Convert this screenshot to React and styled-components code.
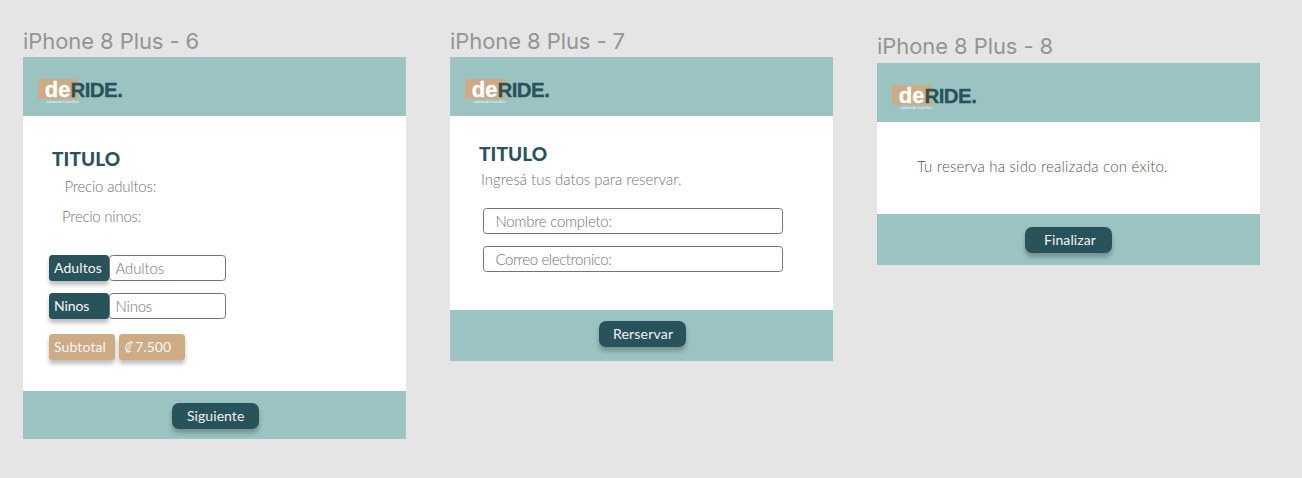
import React from "react";
import styled, { createGlobalStyle } from "styled-components";

const Global = createGlobalStyle`
  * { box-sizing: border-box; }
  body { margin: 0; background: #e5e5e5; }
`;

const teal = "#9bc3c1";
const dark = "#29535b";
const sand = "#cdab85";
const body = '"Lato", "Noto Sans", sans-serif';

const Board = styled.main`
  width: 1302px;
  height: 478px;
  padding-left: 23px;
  display: flex;
  align-items: flex-start;
  gap: 44.5px;
  background: #e5e5e5;
  overflow: hidden;
`;

const Artboard = styled.section`
  width: 382.5px;
  padding-top: ${(p) => p.$top}px;
`;

const Label = styled.h2`
  margin: 0;
  height: 30px;
  font: 430 22px/${(p) => p.$lh ?? 28}px "Inter", sans-serif;
  letter-spacing: -0.08px;
  color: #949494;
  white-space: nowrap;
`;

const Screen = styled.div`
  display: flex;
  flex-direction: column;
  height: ${(p) => p.$h}px;
  background: #fff;
`;

const Header = styled.header`
  flex: none;
  height: 59px;
  padding: 22px 0 0 14.5px;
  background: ${teal};
`;

const Content = styled.div`
  flex: 1;
  display: flex;
  flex-direction: column;
  align-items: flex-start;
  padding: ${(p) => p.$pad};
`;

const Footer = styled.footer`
  flex: none;
  height: ${(p) => p.$h}px;
  padding: ${(p) => p.$pt}px 0 0 ${(p) => p.$pl}px;
  background: ${teal};
`;

const LogoBox = styled.div`
  width: 40.7px;
  height: 20px;
  padding-left: 7.2px;
  background: ${sand};
`;

const Wordmark = styled.div`
  display: flex;
  align-items: baseline;
  height: 21px;
  font: 700 20.5px/21px "Liberation Sans", sans-serif;
  color: ${dark};
  white-space: nowrap;
  -webkit-text-stroke: 0.3px;
`;

const De = styled.span`
  font-size: 22px;
  letter-spacing: 0.1px;
  color: #fff;
`;

const Ride = styled.span`
  letter-spacing: -0.6px;
`;

const Tagline = styled.div`
  margin-left: 1.5px;
  font: 400 3.4px/5px "Liberation Sans", sans-serif;
  letter-spacing: -0.1px;
  color: #f2f7f7;
  white-space: nowrap;
`;

const Title = styled.h1`
  margin: ${(p) => p.$m ?? "0"};
  font: 900 19px/24px ${body};
  letter-spacing: 0.1px;
  color: ${dark};
`;

const Text = styled.p`
  margin: ${(p) => p.$m ?? "0"};
  font: 300 15px/20px ${body};
  letter-spacing: ${(p) => p.$ls ?? 0}px;
  color: ${(p) => p.$color ?? "#747474"};
  white-space: nowrap;
`;

const Row = styled.div`
  display: flex;
  gap: ${(p) => p.$gap ?? 0}px;
  margin-top: ${(p) => p.$mt ?? 0}px;
`;

const Tag = styled.div`
  width: ${(p) => p.$w}px;
  height: 26px;
  padding-left: 5.5px;
  border-radius: 3.5px;
  background: ${(p) => p.$bg ?? dark};
  box-shadow: 0 4px 4px rgba(0, 0, 0, 0.25);
  color: #f5f7f7;
  font: 400 14px/26px ${body};
  letter-spacing: ${(p) => p.$ls ?? 0}px;
  white-space: nowrap;
`;

const Currency = styled.span`
  font: italic 300 15px/20px "Noto Sans", sans-serif;
  letter-spacing: -0.8px;
`;

const Field = styled.div`
  width: ${(p) => p.$w}px;
  height: 26px;
  margin: ${(p) => p.$m ?? "0"};
  padding: 0 0 0 ${(p) => p.$pl}px;
  border: 1px solid #747474;
  border-radius: 3.5px;
  background: #fff;
  color: #747474;
  font: 300 15px/25px ${body};
  letter-spacing: ${(p) => p.$ls ?? 0}px;
  white-space: nowrap;
`;

const Button = styled.button`
  display: block;
  width: 87px;
  height: 26px;
  padding: 0 0 0 ${(p) => p.$pl}px;
  border: 0;
  border-radius: 7px;
  background: ${dark};
  box-shadow: 0 4px 4px rgba(0, 0, 0, 0.25);
  color: #f0f4f4;
  font: 400 14px/26px ${body};
  letter-spacing: ${(p) => p.$ls ?? 0}px;
  text-align: left;
  white-space: nowrap;
`;

function Brand() {
  return (
    <Header>
      <LogoBox>
        <Wordmark>
          <De>de</De>
          <Ride>RIDE.</Ride>
        </Wordmark>
        <Tagline>explorando Costa Rica</Tagline>
      </LogoBox>
    </Header>
  );
}

export default function App() {
  return (
    <>
      <Global />
      <Board>
        <Artboard $top={27}>
          <Label>iPhone 8 Plus - 6</Label>
          <Screen $h={381.5}>
            <Brand />
            <Content $pad="31px 0 0 25.5px">
              <Title $m="0 0 0 3.5px">TITULO</Title>
              <Text $m="5px 0 0 16px" $ls={-0.2}>Precio adultos:</Text>
              <Text $m="10px 0 0 13.5px" $ls={-0.25}>Precio ninos:</Text>
              <Row $mt={29}>
                <Tag $w={60} $ls={0.1}>Adultos</Tag>
                <Field $w={117.8} $pl={6} $ls={-0.1}>Adultos</Field>
              </Row>
              <Row $mt={12}>
                <Tag $w={60} $ls={-0.1}>Ninos</Tag>
                <Field $w={117.8} $pl={6} $ls={-0.2}>Ninos</Field>
              </Row>
              <Row $mt={15} $gap={3.7}>
                <Tag $w={66.5} $bg={sand} $ls={0.12}>Subtotal</Tag>
                <Tag $w={66.7} $bg={sand}><Currency>₡</Currency> 7.500</Tag>
              </Row>
            </Content>
            <Footer $h={47.5} $pt={12} $pl={149}>
              <Button $pl={15} $ls={0.06}>Siguiente</Button>
            </Footer>
          </Screen>
        </Artboard>

        <Artboard $top={27}>
          <Label>iPhone 8 Plus - 7</Label>
          <Screen $h={303.5}>
            <Brand />
            <Content $pad="26px 0 0 29px">
              <Title>TITULO</Title>
              <Text $m="3px 0 0 2px">Ingresá tus datos para reservar.</Text>
              <Field $w={299.4} $pl={11} $m="19px 0 0 4.4px" $ls={-0.25}>Nombre completo:</Field>
              <Field $w={299.4} $pl={11} $m="12px 0 0 4.4px" $ls={-0.4}>Correo electronico:</Field>
            </Content>
            <Footer $h={51} $pt={11} $pl={149}>
              <Button $pl={14} $ls={0.2}>Rerservar</Button>
            </Footer>
          </Screen>
        </Artboard>

        <Artboard $top={32.5}>
          <Label $lh={27}>iPhone 8 Plus - 8</Label>
          <Screen $h={202.5}>
            <Brand />
            <Content $pad="34px 0 0 40px">
              <Text $color="#555" $ls={0.2}>Tu reserva ha sido realizada con éxito.</Text>
            </Content>
            <Footer $h={51.5} $pt={13.5} $pl={148}>
              <Button $pl={19} $ls={0.1}>Finalizar</Button>
            </Footer>
          </Screen>
        </Artboard>
      </Board>
    </>
  );
}
